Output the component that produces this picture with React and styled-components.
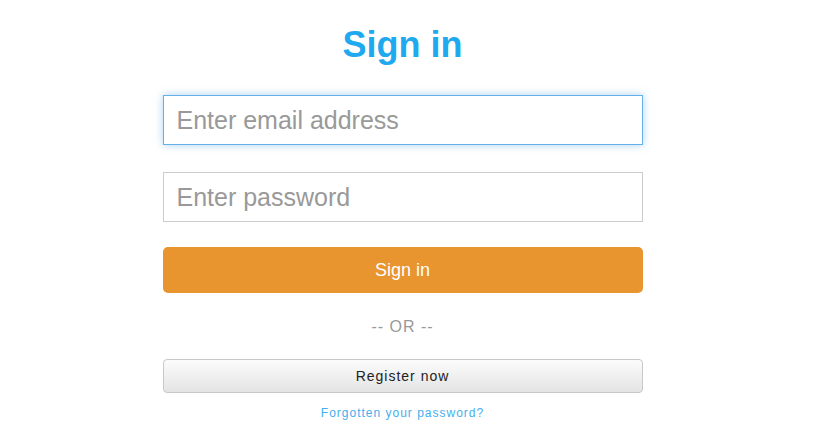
import React from 'react';
import styled, { createGlobalStyle } from 'styled-components';

const GlobalStyle = createGlobalStyle`
    html, body {
        margin: 0;
        padding: 0;
        background: #fff;
        font-family: "Liberation Sans", Helvetica, Arial, sans-serif;
    }
`;

function App(){
    return(
        <Page>
            <GlobalStyle />
            <Form onSubmit={e => e.preventDefault()}>
                <Title>Sign in</Title>
                <Field type="email" placeholder="Enter email address" $focused $gap={30} />
                <Field type="password" placeholder="Enter password" $gap={27} />
                <SubmitButton type="submit">Sign in</SubmitButton>
                <Divider>-- OR --</Divider>
                <RegisterButton type="button">Register now</RegisterButton>
                <ForgotLink href="#">Forgotten your password?</ForgotLink>
            </Form>
        </Page>
    );
}
export default App;

let accent = "#1fa9ee";

const Page = styled.div`
    display: flex;
    justify-content: center;
    width: 816px;
    height: 433px;
    padding-right: 11px;
    box-sizing: border-box;
    overflow: hidden;
`;

const Form = styled.form`
    display: flex;
    flex-direction: column;
    align-items: center;
    width: 480px;
    padding-top: 25px;
`;

const Title = styled.h1`
    margin: 0;
    font-size: 36px;
    line-height: 40px;
    font-weight: bold;
    color: ${accent};
`;

const Field = styled.input`
    width: 100%;
    height: 50px;
    box-sizing: border-box;
    margin-top: ${p => p.$gap}px;
    padding: 0 13px;
    font-family: inherit;
    font-size: 25px;
    color: #333;
    background: #fff;
    border: 1px solid ${p => p.$focused ? '#66afe9' : '#cccccc'};
    border-radius: 0;
    box-shadow: ${p => p.$focused ? '0 0 8px rgba(102,175,233,0.55)' : 'none'};
    outline: none;

    &::placeholder{
        color: #999;
    }
`;

const SubmitButton = styled.button`
    width: 100%;
    height: 46px;
    margin-top: 25px;
    border: none;
    border-radius: 5px;
    background: #e8952f;
    color: #fff;
    font-family: inherit;
    font-size: 18px;
    cursor: pointer;
`;

const Divider = styled.div`
    margin-top: 24px;
    font-size: 16px;
    line-height: 20px;
    letter-spacing: 1px;
    color: #999;
`;

const RegisterButton = styled.button`
    width: 100%;
    height: 34px;
    margin-top: 22px;
    border: 1px solid #c8c8c8;
    border-radius: 4px;
    background: linear-gradient(to bottom, #fcfcfc 0%, #e4e4e4 100%);
    color: #222;
    font-family: inherit;
    font-size: 14px;
    letter-spacing: 1px;
    cursor: pointer;
`;

const ForgotLink = styled.a`
    margin-top: 12px;
    font-size: 12px;
    line-height: 16px;
    letter-spacing: 1px;
    color: #46aeee;
    text-decoration: none;
`;
